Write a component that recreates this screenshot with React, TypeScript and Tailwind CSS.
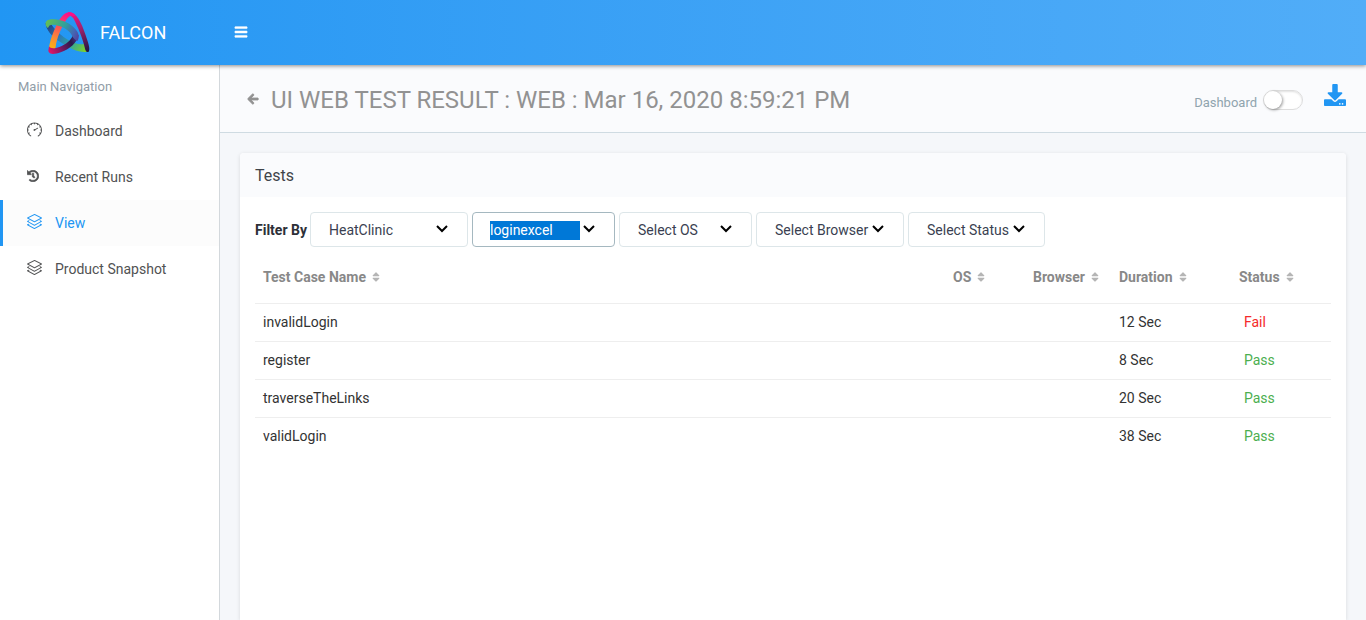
import type { ReactNode } from "react";
import { FaArrowLeft, FaBars, FaDownload, FaHistory, FaSort } from "react-icons/fa";
import { SlLayers, SlSpeedometer } from "react-icons/sl";

function Logo() {
  return (
    <svg viewBox="0 0 165 165" className="size-[55px]" aria-hidden="true">
      <defs>
        <linearGradient id="right" gradientUnits="userSpaceOnUse" x1="85" y1="28" x2="142" y2="142">
          <stop offset="0" stopColor="#f5137f" />
          <stop offset="0.4" stopColor="#a8216f" />
          <stop offset="1" stopColor="#1b1640" />
        </linearGradient>
        <linearGradient id="left" gradientUnits="userSpaceOnUse" x1="85" y1="26" x2="36" y2="134">
          <stop offset="0" stopColor="#fa1089" />
          <stop offset="0.35" stopColor="#f9475f" />
          <stop offset="0.7" stopColor="#fb8a35" />
          <stop offset="1" stopColor="#fdb60f" />
        </linearGradient>
        <linearGradient id="under" gradientUnits="userSpaceOnUse" x1="22" y1="60" x2="134" y2="140">
          <stop offset="0" stopColor="#233f7d" />
          <stop offset="0.35" stopColor="#2b78b8" />
          <stop offset="0.65" stopColor="#2fa6a0" />
          <stop offset="1" stopColor="#7bd02c" />
        </linearGradient>
        <linearGradient id="over" gradientUnits="userSpaceOnUse" x1="20" y1="55" x2="116" y2="100">
          <stop offset="0" stopColor="#63bd55" />
          <stop offset="0.5" stopColor="#2f9f9f" />
          <stop offset="0.8" stopColor="#4467b4" />
          <stop offset="1" stopColor="#54419b" />
        </linearGradient>
        <linearGradient id="base" gradientUnits="userSpaceOnUse" x1="112" y1="98" x2="30" y2="138">
          <stop offset="0" stopColor="#4a3585" />
          <stop offset="0.25" stopColor="#2a1a4b" />
          <stop offset="0.65" stopColor="#7c1a63" />
          <stop offset="1" stopColor="#de1366" />
        </linearGradient>
      </defs>
      <path
        d="M17 54 C16 72 36 96 62 112 C88 130 114 143 140 141 C146 138 140 122 132 117 C118 120 98 114 80 102 C58 88 42 72 34 58 Z"
        fill="url(#under)"
      />
      <path
        d="M84 22 C108 18 124 52 136 88 C144 112 152 132 146 140 C140 144 136 138 134 127 C128 100 114 66 100 40 C94 32 88 30 84 30 Z"
        fill="url(#right)"
      />
      <path
        d="M104 34 C94 28 86 34 78 46 C64 68 50 100 47 126 L44 134 L27 132 C28 112 40 78 54 52 C64 32 78 20 90 22 C98 23 106 28 104 34 Z"
        fill="url(#left)"
      />
      <path
        d="M27 124 C32 132 44 131 58 126 C78 118 94 104 98 92 L116 90 C112 112 88 134 62 142 C44 148 28 150 25 138 Z"
        fill="url(#base)"
      />
      <path
        d="M18 62 C13 48 24 42 42 43 C68 44 92 56 106 72 C118 86 119 98 112 108 C106 106 100 100 97 94 C92 82 78 70 60 64 C44 58 28 56 26 66 C24 70 20 68 18 62 Z"
        fill="url(#over)"
      />
    </svg>
  );
}

function NavItem({ icon, label, active }: { icon: ReactNode; label: string; active?: boolean }) {
  return (
    <li>
      <a
        href="#"
        aria-current={active ? "page" : undefined}
        className={
          active
            ? "flex h-[46px] items-center gap-3 border-l-[3px] border-[#2196f3] bg-[#fcfcfc] pl-6 text-[#2196f3]"
            : "flex h-[46px] items-center gap-3 border-l-[3px] border-transparent pl-6 text-[#515253]"
        }
      >
        <span className="flex w-4 justify-start pb-[3px]">{icon}</span>
        <span className="text-sm">{label}</span>
      </a>
    </li>
  );
}

function Filter({ label, value, width, focused }: { label: string; value: string; width: string; focused?: boolean }) {
  return (
    <div className={`relative ${width}`}>
      <select
        aria-label={label}
        className={
          focused
            ? "h-[35px] w-full appearance-none rounded border border-[#a5b8c0] bg-[#0078d7] bg-clip-content pt-2 pr-[34px] pb-[6px] pl-[17px] text-sm leading-[19px] text-white outline-none"
            : "h-[35px] w-full appearance-none rounded border border-[#dde6e9] bg-white pt-2 pr-[34px] pb-[6px] pl-[18px] text-sm leading-[19px] text-[#3a3f51] outline-none"
        }
      >
        <option>{value}</option>
      </select>
      <svg
        viewBox="0 0 12 8"
        className="pointer-events-none absolute top-[13px] right-5 h-2 w-3"
        fill="none"
        stroke="#000"
        strokeWidth="2"
        aria-hidden="true"
      >
        <path d="M1 1l5 5 5-5" />
      </svg>
    </div>
  );
}

function Heading({ children }: { children: ReactNode }) {
  return (
    <th scope="col" className="px-2 pt-1 text-left font-bold">
      <button type="button" className="flex items-center gap-1">
        {children}
        <FaSort size={12} className="text-[#b5b5b5]" />
      </button>
    </th>
  );
}

const tests = [
  { name: "invalidLogin", duration: "12 Sec", status: "Fail" },
  { name: "register", duration: "8 Sec", status: "Pass" },
  { name: "traverseTheLinks", duration: "20 Sec", status: "Pass" },
  { name: "validLogin", duration: "38 Sec", status: "Pass" },
];

export default function App() {
  return (
    <div className="flex h-screen min-h-[620px] flex-col overflow-hidden bg-[#f5f7fa] font-[Roboto,sans-serif] text-sm text-[#3a3f51]">
      <header className="relative z-10 flex h-[65px] shrink-0 items-center bg-linear-to-r from-[#2196f3] to-[#51adf8] text-white shadow-[0_1px_4px_rgba(0,0,0,0.45)]">
        <a href="#" className="flex w-[220px] items-center gap-[5px] pl-10">
          <Logo />
          <span className="text-lg">FALCON</span>
        </a>
        <button type="button" aria-label="Toggle menu" className="mb-[2px] ml-[14px]">
          <FaBars size={14} stroke="currentColor" strokeWidth={20} />
        </button>
      </header>

      <div className="flex grow">
        <aside className="w-[220px] shrink-0 border-r border-[#d3d8dc] bg-white">
          <h2 className="h-[43px] pt-[13px] pl-[18px] text-[13px] leading-[18px] text-[#919da8]">
            Main Navigation
          </h2>
          <nav>
            <ul>
              <NavItem icon={<SlSpeedometer size={15} />} label="Dashboard" />
              <NavItem icon={<FaHistory size={12} stroke="currentColor" strokeWidth={24} />} label="Recent Runs" />
              <NavItem icon={<SlLayers size={15} />} label="View" active />
              <NavItem icon={<SlLayers size={15} />} label="Product Snapshot" />
            </ul>
          </nav>
        </aside>

        <main className="flex min-w-0 grow flex-col">
          <div className="flex h-[68px] shrink-0 items-center border-b border-[#cfdbe2] bg-[#fafbfd] pr-5 pl-[27px]">
            <button type="button" aria-label="Back" className="text-[#929292]">
              <FaArrowLeft size={12} stroke="currentColor" strokeWidth={40} />
            </button>
            <h1 className="ml-3 grow pt-[2px] text-2xl text-[#929292]">
              UI WEB TEST RESULT : WEB : Mar 16, 2020 8:59:21 PM
            </h1>
            <label htmlFor="dashboard-switch" className="pt-[9px] text-[13px] text-[#90a4ae]">
              Dashboard
            </label>
            <input
              id="dashboard-switch"
              type="checkbox"
              role="switch"
              className="mt-[2px] ml-[6px] h-5 w-10 appearance-none rounded-full border border-[#dddddd] bg-white shadow-[inset_0_1px_2px_rgba(0,0,0,0.12)] before:block before:size-[18px] before:rounded-full before:bg-white before:shadow-[1px_1px_3px_rgba(0,0,0,0.4)] checked:bg-[#2196f3] checked:before:ml-5"
            />
            <button type="button" aria-label="Download" className="mb-2 ml-[21px] text-[#2196f3]">
              <FaDownload size={22} />
            </button>
          </div>

          <section className="mx-5 mt-5 grow rounded-t bg-white shadow-[0_1px_4px_rgba(0,0,0,0.12)]">
            <h2 className="flex h-11 items-center rounded-t bg-[#fafbfd] px-[15px] pt-[2px] text-base text-[#3f4449]">
              Tests
            </h2>
            <div className="p-[15px]">
              <div className="flex items-center gap-1">
                <span className="-mr-px font-bold text-[#2d3038]">Filter By</span>
                <Filter label="Application" value="HeatClinic" width="w-[158px]" />
                <Filter label="Test suite" value="loginexcel" width="w-[143px]" focused />
                <Filter label="OS" value="Select OS" width="w-[133px]" />
                <Filter label="Browser" value="Select Browser" width="w-[148px]" />
                <Filter label="Status" value="Select Status" width="w-[137px]" />
              </div>

              <table className="w-full table-fixed border-collapse">
                <colgroup>
                  <col />
                  <col className="w-20" />
                  <col className="w-[86px]" />
                  <col className="w-[120px]" />
                  <col className="w-[100px]" />
                </colgroup>
                <thead>
                  <tr className="h-[56px] text-[#888888]">
                    <Heading>Test Case Name</Heading>
                    <Heading>OS</Heading>
                    <Heading>Browser</Heading>
                    <Heading>Duration</Heading>
                    <Heading>Status</Heading>
                  </tr>
                </thead>
                <tbody>
                  {tests.map((test) => (
                    <tr key={test.name} className="h-[38px] border-t border-[#eeeeee] text-[#333]">
                      <td className="px-2">{test.name}</td>
                      <td />
                      <td />
                      <td className="px-2">{test.duration}</td>
                      <td className={test.status === "Fail" ? "pl-[13px] text-[#f52a2a]" : "pl-[13px] text-[#4caf50]"}>
                        {test.status}
                      </td>
                    </tr>
                  ))}
                </tbody>
              </table>
            </div>
          </section>
        </main>
      </div>
    </div>
  );
}
